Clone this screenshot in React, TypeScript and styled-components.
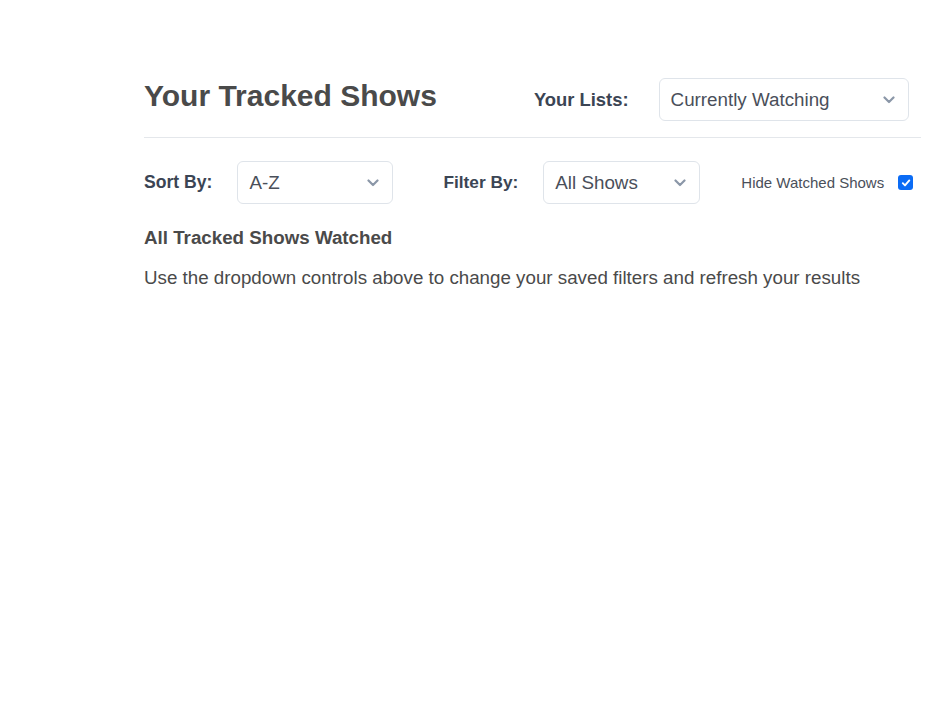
import React from 'react';
import styled, { createGlobalStyle } from 'styled-components';

const GlobalStyle = createGlobalStyle`
  body {
    margin: 0;
    background: #ffffff;
    font-family: "Liberation Sans", Arial, sans-serif;
    color: #4a4a4a;
  }
`;

type DropdownProps = {
  value: string;
  width: number;
};

const Dropdown: React.FC<DropdownProps> = ({ value, width }) => {
  return (
    <SelectBox $width={width}>
      <SelectValue>{value}</SelectValue>
      <Chevron width="12" height="8" viewBox="0 0 12 8">
        <path d="M1.5 1.5 L6 6 L10.5 1.5" fill="none" stroke="#8b97a8" strokeWidth="2.2" strokeLinecap="round" strokeLinejoin="round" />
      </Chevron>
    </SelectBox>
  );
};

const App: React.FC = () => {
  return (
    <>
      <GlobalStyle />
      <Page>
        <Header>
          <Title>Your Tracked Shows</Title>
          <ListPicker>
            <Label $size={18.4}>Your Lists:</Label>
            <Dropdown value="Currently Watching" width={250} />
          </ListPicker>
        </Header>
        <Controls>
          <ControlGroup>
            <Label $size={17.6}>Sort By:</Label>
            <Dropdown value="A-Z" width={156} />
          </ControlGroup>
          <ControlGroup>
            <Label>Filter By:</Label>
            <Dropdown value="All Shows" width={157} />
          </ControlGroup>
          <CheckGroup>
            <CheckLabel>Hide Watched Shows</CheckLabel>
            <Check>
              <svg width="10" height="10" viewBox="0 0 10 10">
                <path d="M1.8 5.2 L4 7.4 L8.3 2.4" fill="none" stroke="#ffffff" strokeWidth="1.9" strokeLinecap="round" strokeLinejoin="round" />
              </svg>
            </Check>
          </CheckGroup>
        </Controls>
        <EmptyTitle>All Tracked Shows Watched</EmptyTitle>
        <EmptyText>Use the dropdown controls above to change your saved filters and refresh your results</EmptyText>
      </Page>
    </>
  );
};

export default App;

const Page = styled.div`
  width: 777px;
  margin-left: 144px;
  padding-top: 78px;
`;

const Header = styled.div`
  display: flex;
  align-items: center;
  padding-bottom: 16px;
  border-bottom: 1px solid #e4e7eb;
`;

const Title = styled.h1`
  margin: 0 0 8px 0;
  font-size: 30px;
  font-weight: 700;
  color: #4a4a4a;
`;

const ListPicker = styled.div`
  display: flex;
  align-items: center;
  gap: 30px;
  margin-left: 97px;
`;

const Label = styled.span<{ $size?: number }>`
  font-size: ${({ $size }) => $size ?? 17.3}px;
  font-weight: 700;
  color: #3b4554;
`;

const SelectBox = styled.div<{ $width: number }>`
  box-sizing: border-box;
  width: ${({ $width }) => $width}px;
  height: 43px;
  display: flex;
  align-items: center;
  justify-content: space-between;
  padding: 0 13px 0 11px;
  border: 1px solid #dfe4ea;
  border-radius: 6px;
  background: #ffffff;
`;

const SelectValue = styled.span`
  font-size: 18.8px;
  color: #4a4f5a;
`;

const Chevron = styled.svg`
  display: block;
`;

const Controls = styled.div`
  display: flex;
  align-items: center;
  padding-top: 23px;
`;

const ControlGroup = styled.div`
  display: flex;
  align-items: center;
  gap: 25px;
  margin-right: 50px;

  &:nth-child(2) {
    margin-right: 41px;
  }
`;

const CheckGroup = styled.div`
  display: flex;
  align-items: center;
  gap: 14px;
`;

const CheckLabel = styled.span`
  font-size: 15px;
  color: #4a4f5a;
`;

const Check = styled.span`
  width: 15px;
  height: 15px;
  border-radius: 3px;
  background: #0b6cf5;
  display: flex;
  align-items: center;
  justify-content: center;
`;

const EmptyTitle = styled.h3`
  margin: 23px 0 0 0;
  font-size: 18.75px;
  font-weight: 700;
  color: #4a4a4a;
`;

const EmptyText = styled.p`
  margin: 18px 0 0 0;
  font-size: 18.75px;
  color: #4a4a4a;
`;
